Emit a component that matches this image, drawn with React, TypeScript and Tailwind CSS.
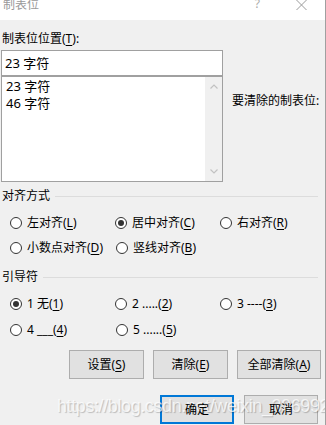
import React from "react";

function K({ children }: { children: React.ReactNode }) {
  return <span className="underline underline-offset-[2px]">{children}</span>;
}

function Radio({ checked, children }: { checked?: boolean; children: React.ReactNode }) {
  return (
    <div className="flex items-center gap-[5px] w-[106px] h-[16px]">
      <span className="w-[12px] h-[12px] rounded-full border border-[#333333] bg-white flex items-center justify-center shrink-0">
        {checked && <span className="w-[6px] h-[6px] rounded-full bg-[#333333]" />}
      </span>
      <span className="whitespace-nowrap">{children}</span>
    </div>
  );
}

function Group({ title }: { title: string }) {
  return (
    <div className="flex items-center h-[16px] pr-[7px]">
      <span className="pl-[1px]">{title}</span>
      <div className="flex-1 h-px bg-[#dcdcdc] ml-[5px]" />
    </div>
  );
}

function Btn({ children, primary, w = "w-[75px]" }: { children: React.ReactNode; primary?: boolean; w?: string }) {
  return (
    <div
      className={
        primary
          ? `${w} h-[29px] bg-[#e1e1e1] border-2 border-[#0078d7] flex items-center justify-center`
          : `${w} h-[29px] bg-[#e1e1e1] border border-[#adadad] flex items-center justify-center`
      }
    >
      <span className="relative z-10">{children}</span>
    </div>
  );
}

export default function App() {
  return (
    <div className="relative w-[326px] h-[425px] overflow-hidden bg-[#f0f0f0] border-r border-[#a0a0a0] text-[12px] leading-[16px] text-black font-['Noto_Sans','Noto_Sans_CJK_SC',sans-serif]">
      {/* Title bar */}
      <div className="h-[20px] bg-white flex items-start text-[#999999]">
        <span className="ml-[3px] -mt-[3px] text-[12px]">制表位</span>
        <span className="ml-auto -mt-[4px] text-[12px] text-[#aaaaaa]">?</span>
        <svg className="ml-[36px] mr-[18px]" width="11" height="10" viewBox="0 0 11 10">
          <path d="M0.5 0 L10.5 10 M10.5 0 L0.5 10" stroke="#9a9a9a" strokeWidth="1" fill="none" />
        </svg>
      </div>

      {/* Body */}
      <div className="pl-[1px]">
        <div className="pt-[11px] pl-[1px]">
          制表位位置(<K>T</K>):
        </div>
        <div className="flex mt-[3px]">
          <div className="w-[222px]">
            <div className="h-[26px] bg-white border border-[#a0a0a0] flex items-center pl-[3px] text-[13px]">
              23 字符
            </div>
            <div className="h-[106px] bg-white border border-[#a0a0a0] flex">
              <div className="flex-1 pt-[1px] pl-[4px] leading-[17px] text-[13px]">
                <div>23 字符</div>
                <div>46 字符</div>
              </div>
              <div className="w-[17px] bg-[#f0f0f0] flex flex-col items-center justify-between py-[7px]">
                <svg width="8" height="5" viewBox="0 0 8 5">
                  <path d="M0.5 4.5 L4 1 L7.5 4.5" stroke="#c2c2c2" strokeWidth="1.2" fill="none" />
                </svg>
                <svg width="8" height="5" viewBox="0 0 8 5">
                  <path d="M0.5 0.5 L4 4 L7.5 0.5" stroke="#c2c2c2" strokeWidth="1.2" fill="none" />
                </svg>
              </div>
            </div>
          </div>
          <div className="pl-[9px] pt-[43px] whitespace-nowrap">要清除的制表位:</div>
        </div>

        {/* Alignment */}
        <div className="mt-[6px]">
          <Group title="对齐方式" />
        </div>
        <div className="mt-[11px] pl-[9px] flex flex-col gap-[9px]">
          <div className="flex">
            <Radio>左对齐(<K>L</K>)</Radio>
            <Radio checked>居中对齐(<K>C</K>)</Radio>
            <Radio>右对齐(<K>R</K>)</Radio>
          </div>
          <div className="flex">
            <Radio>小数点对齐(<K>D</K>)</Radio>
            <Radio>竖线对齐(<K>B</K>)</Radio>
          </div>
        </div>

        {/* Leader */}
        <div className="mt-[13px]">
          <Group title="引导符" />
        </div>
        <div className="mt-[11px] pl-[9px] flex flex-col gap-[10px]">
          <div className="flex">
            <Radio checked>1 无(<K>1</K>)</Radio>
            <Radio>2 .....(<K>2</K>)</Radio>
            <Radio>3 ----(<K>3</K>)</Radio>
          </div>
          <div className="flex">
            <Radio>4 ___(<K>4</K>)</Radio>
            <Radio>5 ......(<K>5</K>)</Radio>
          </div>
        </div>

        {/* Buttons */}
        <div className="mt-[12px] flex justify-end gap-[9px] pr-[4px]">
          <Btn>设置(<K>S</K>)</Btn>
          <Btn>清除(<K>E</K>)</Btn>
          <Btn w="w-[84px]">全部清除(<K>A</K>)</Btn>
        </div>
        <div className="mt-[16px] flex justify-end gap-[10px] pr-[7px]">
          <Btn primary w="w-[74px]">确定</Btn>
          <Btn w="w-[74px]">取消</Btn>
        </div>
      </div>

      {/* Watermark */}
      <div className="absolute left-[57px] top-[395px] text-[18px] leading-[22px] tracking-[-0.4px] font-['Liberation_Sans',sans-serif] text-white/75 [text-shadow:1px_1px_1px_rgba(0,0,0,0.22)] whitespace-nowrap pointer-events-none">
        https://blog.csdn.net/weixin_39699217
      </div>
    </div>
  );
}
